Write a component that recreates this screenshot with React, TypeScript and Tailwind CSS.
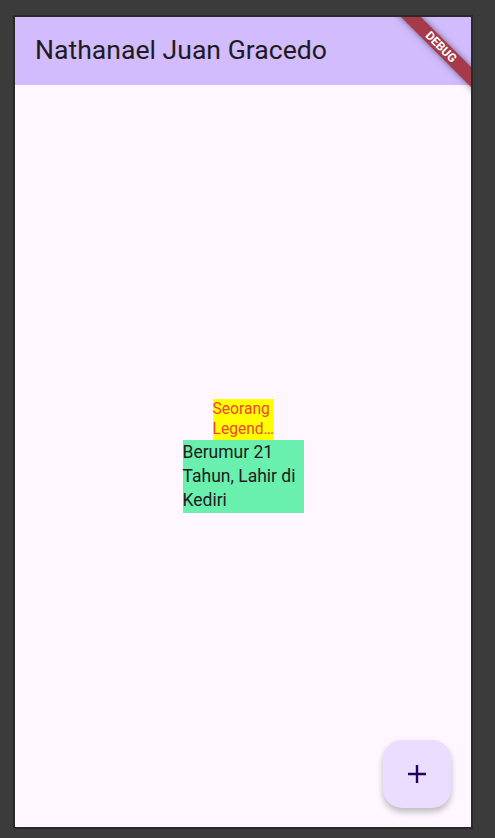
import React from "react";

export default function App() {
  return (
    <div
      className="w-[495px] h-[838px] bg-[#3b3b3b] pt-[17px] pl-[15px] overflow-hidden"
      style={{ fontFamily: "Roboto, 'Noto Sans', sans-serif" }}
    >
      <div className="relative w-[456px] h-[810px] bg-[#fef7ff] overflow-hidden outline outline-2 outline-[#2a2a2a] flex flex-col">
        <div className="h-[68px] bg-[#d2bcfd] flex items-center pl-[20px] pb-[2px] shrink-0">
          <span className="text-[26.6px] text-[#1d1b20] leading-none">Nathanael Juan Gracedo</span>
        </div>
        <div className="flex-1 flex flex-col items-center justify-center">
          <div className="w-[61px] bg-[#ffff00] text-[#f44336] text-[15.6px] leading-[20.5px] whitespace-nowrap">
            Seorang<br />Legend…
          </div>
          <div className="w-[121px] bg-[#69f0ae] text-[#1d1b20] text-[17.5px] leading-[24.33px] pb-px">
            Berumur 21 Tahun, Lahir di Kediri
          </div>
        </div>
        <div className="absolute right-[20px] bottom-[19px] w-[68px] h-[68px] rounded-[19px] bg-[#eaddff] flex items-center justify-center shadow-[0_4px_6px_rgba(0,0,0,0.25)]">
          <svg width="20" height="20" viewBox="0 0 20 20">
            <path d="M10 1v18M1 10h18" stroke="#21005d" strokeWidth="2.4" />
          </svg>
        </div>
        <div className="absolute top-[30px] right-[30px] w-0 h-0">
          <div
            className="absolute w-[180px] h-[14px] -left-[90px] -top-[7px] rotate-45 bg-[#a6394a] flex items-center justify-center shadow-[0_0_6px_rgba(0,0,0,0.5)]"
          >
            <span className="text-white font-bold text-[12px] leading-none">DEBUG</span>
          </div>
        </div>
      </div>
    </div>
  );
}
